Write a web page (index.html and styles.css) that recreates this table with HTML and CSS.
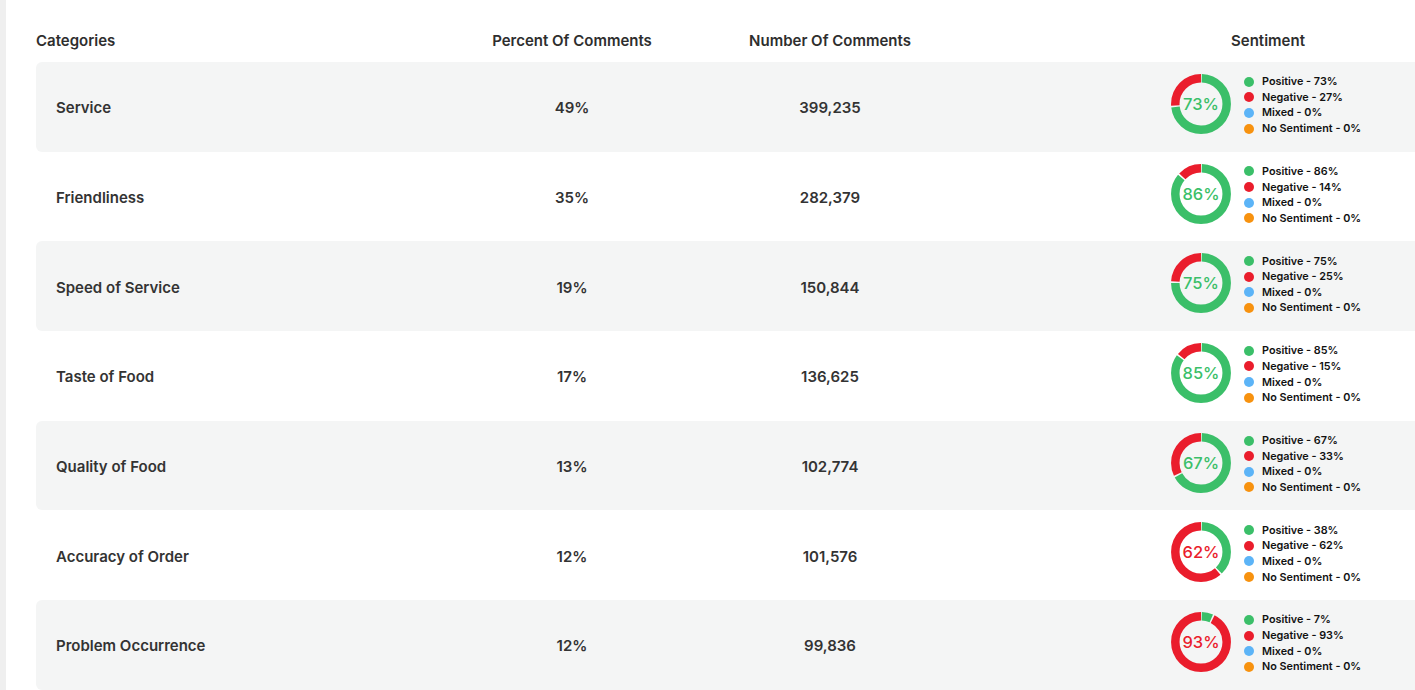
FILE: index.html
```html
<!DOCTYPE html>
<html>
<head>
<meta charset="utf-8">
<link rel="stylesheet" href="styles.css">
</head>
<body>
<div class="page">
  <div class="strip"></div>
  <div class="content">
    <div class="head grid">
      <div class="c-cat">Categories</div>
      <div class="c-pct">Percent Of Comments</div>
      <div class="c-num">Number Of Comments</div>
      <div class="c-sp"></div>
      <div class="c-sent">Sentiment</div>
    </div>

    <div class="row grid odd">
      <div class="c-cat">Service</div>
      <div class="c-pct">49%</div>
      <div class="c-num">399,235</div>
      <div class="c-sp"></div>
      <div class="c-sent sent">
        <svg class="donut" viewBox="0 0 60 60" width="60" height="60">
          <g transform="rotate(-90 30 30)">
            <circle cx="30" cy="30" r="25.7" class="arc pos" stroke-dasharray="116.4 161.5" stroke-dashoffset="-0.75"/>
            <circle cx="30" cy="30" r="25.7" class="arc neg" stroke-dasharray="42.1 161.5" stroke-dashoffset="-118.65"/>
          </g>
          <text x="30" y="36" class="dtext tpos">73%</text>
        </svg>
        <ul class="legend">
          <li><span class="dot d-pos"></span>Positive - 73%</li>
          <li><span class="dot d-neg"></span>Negative - 27%</li>
          <li><span class="dot d-mix"></span>Mixed - 0%</li>
          <li><span class="dot d-none"></span>No Sentiment - 0%</li>
        </ul>
      </div>
    </div>

    <div class="row grid">
      <div class="c-cat">Friendliness</div>
      <div class="c-pct">35%</div>
      <div class="c-num">282,379</div>
      <div class="c-sp"></div>
      <div class="c-sent sent">
        <svg class="donut" viewBox="0 0 60 60" width="60" height="60">
          <g transform="rotate(-90 30 30)">
            <circle cx="30" cy="30" r="25.7" class="arc pos" stroke-dasharray="137.39 161.5" stroke-dashoffset="-0.75"/>
            <circle cx="30" cy="30" r="25.7" class="arc neg" stroke-dasharray="21.11 161.5" stroke-dashoffset="-139.64"/>
          </g>
          <text x="30" y="36" class="dtext tpos">86%</text>
        </svg>
        <ul class="legend">
          <li><span class="dot d-pos"></span>Positive - 86%</li>
          <li><span class="dot d-neg"></span>Negative - 14%</li>
          <li><span class="dot d-mix"></span>Mixed - 0%</li>
          <li><span class="dot d-none"></span>No Sentiment - 0%</li>
        </ul>
      </div>
    </div>

    <div class="row grid odd">
      <div class="c-cat">Speed of Service</div>
      <div class="c-pct">19%</div>
      <div class="c-num">150,844</div>
      <div class="c-sp"></div>
      <div class="c-sent sent">
        <svg class="donut" viewBox="0 0 60 60" width="60" height="60">
          <g transform="rotate(-90 30 30)">
            <circle cx="30" cy="30" r="25.7" class="arc pos" stroke-dasharray="119.63 161.5" stroke-dashoffset="-0.75"/>
            <circle cx="30" cy="30" r="25.7" class="arc neg" stroke-dasharray="38.88 161.5" stroke-dashoffset="-121.88"/>
          </g>
          <text x="30" y="36" class="dtext tpos">75%</text>
        </svg>
        <ul class="legend">
          <li><span class="dot d-pos"></span>Positive - 75%</li>
          <li><span class="dot d-neg"></span>Negative - 25%</li>
          <li><span class="dot d-mix"></span>Mixed - 0%</li>
          <li><span class="dot d-none"></span>No Sentiment - 0%</li>
        </ul>
      </div>
    </div>

    <div class="row grid">
      <div class="c-cat">Taste of Food</div>
      <div class="c-pct">17%</div>
      <div class="c-num">136,625</div>
      <div class="c-sp"></div>
      <div class="c-sent sent">
        <svg class="donut" viewBox="0 0 60 60" width="60" height="60">
          <g transform="rotate(-90 30 30)">
            <circle cx="30" cy="30" r="25.7" class="arc pos" stroke-dasharray="135.78 161.5" stroke-dashoffset="-0.75"/>
            <circle cx="30" cy="30" r="25.7" class="arc neg" stroke-dasharray="22.73 161.5" stroke-dashoffset="-138.03"/>
          </g>
          <text x="30" y="36" class="dtext tpos">85%</text>
        </svg>
        <ul class="legend">
          <li><span class="dot d-pos"></span>Positive - 85%</li>
          <li><span class="dot d-neg"></span>Negative - 15%</li>
          <li><span class="dot d-mix"></span>Mixed - 0%</li>
          <li><span class="dot d-none"></span>No Sentiment - 0%</li>
        </ul>
      </div>
    </div>

    <div class="row grid odd">
      <div class="c-cat">Quality of Food</div>
      <div class="c-pct">13%</div>
      <div class="c-num">102,774</div>
      <div class="c-sp"></div>
      <div class="c-sent sent">
        <svg class="donut" viewBox="0 0 60 60" width="60" height="60">
          <g transform="rotate(-90 30 30)">
            <circle cx="30" cy="30" r="25.7" class="arc pos" stroke-dasharray="106.71 161.5" stroke-dashoffset="-0.75"/>
            <circle cx="30" cy="30" r="25.7" class="arc neg" stroke-dasharray="51.80 161.5" stroke-dashoffset="-108.96"/>
          </g>
          <text x="30" y="36" class="dtext tpos">67%</text>
        </svg>
        <ul class="legend">
          <li><span class="dot d-pos"></span>Positive - 67%</li>
          <li><span class="dot d-neg"></span>Negative - 33%</li>
          <li><span class="dot d-mix"></span>Mixed - 0%</li>
          <li><span class="dot d-none"></span>No Sentiment - 0%</li>
        </ul>
      </div>
    </div>

    <div class="row grid">
      <div class="c-cat">Accuracy of Order</div>
      <div class="c-pct">12%</div>
      <div class="c-num">101,576</div>
      <div class="c-sp"></div>
      <div class="c-sent sent">
        <svg class="donut" viewBox="0 0 60 60" width="60" height="60">
          <g transform="rotate(-90 30 30)">
            <circle cx="30" cy="30" r="25.7" class="arc pos" stroke-dasharray="59.87 161.5" stroke-dashoffset="-0.75"/>
            <circle cx="30" cy="30" r="25.7" class="arc neg" stroke-dasharray="98.63 161.5" stroke-dashoffset="-62.12"/>
          </g>
          <text x="30" y="36" class="dtext tneg">62%</text>
        </svg>
        <ul class="legend">
          <li><span class="dot d-pos"></span>Positive - 38%</li>
          <li><span class="dot d-neg"></span>Negative - 62%</li>
          <li><span class="dot d-mix"></span>Mixed - 0%</li>
          <li><span class="dot d-none"></span>No Sentiment - 0%</li>
        </ul>
      </div>
    </div>

    <div class="row grid odd">
      <div class="c-cat">Problem Occurrence</div>
      <div class="c-pct">12%</div>
      <div class="c-num">99,836</div>
      <div class="c-sp"></div>
      <div class="c-sent sent">
        <svg class="donut" viewBox="0 0 60 60" width="60" height="60">
          <g transform="rotate(-90 30 30)">
            <circle cx="30" cy="30" r="25.7" class="arc pos" stroke-dasharray="9.81 161.5" stroke-dashoffset="-0.75"/>
            <circle cx="30" cy="30" r="25.7" class="arc neg" stroke-dasharray="148.70 161.5" stroke-dashoffset="-12.06"/>
          </g>
          <text x="30" y="36" class="dtext tneg">93%</text>
        </svg>
        <ul class="legend">
          <li><span class="dot d-pos"></span>Positive - 7%</li>
          <li><span class="dot d-neg"></span>Negative - 93%</li>
          <li><span class="dot d-mix"></span>Mixed - 0%</li>
          <li><span class="dot d-none"></span>No Sentiment - 0%</li>
        </ul>
      </div>
    </div>
  </div>
</div>
</body>
</html>
```

FILE: styles.css
```css
* { box-sizing: border-box; }
html, body {
  margin: 0;
  padding: 0;
  background: #ffffff;
  font-family: "Inter", "Liberation Sans", sans-serif;
  color: #333333;
}
.page {
  display: flex;
  width: 1415px;
  height: 690px;
  overflow: hidden;
}
.strip {
  flex: 0 0 6px;
  background: #efefef;
}
.content {
  flex: 0 0 1430px;
  padding: 31px 0 0 30px;
}
.grid {
  display: grid;
  grid-template-columns: 436px 200px 316px 182px 196px 1fr;
  width: 1400px;
}
.head {
  height: 20px;
  line-height: 20px;
  margin-bottom: 11px;
  font-size: 15px;
  font-weight: 600;
  color: #2e2e2e;
}
.head .c-cat { padding-left: 0; }
.c-pct, .c-num { text-align: center; }
.head .c-sent { text-align: center; }
.row {
  height: 89.7px;
  padding-top: 2px;
  border-radius: 6px 0 0 6px;
  font-size: 15px;
  font-weight: 600;
  color: #333333;
  align-items: center;
}
.row.odd { background: #f4f5f5; }
.row .c-cat { padding-left: 20px; }
.sent {
  align-self: start;
  padding-top: 10px;
  display: flex;
  align-items: flex-start;
  white-space: nowrap;
}
.donut { display: block; flex: 0 0 60px; margin-left: 1px; }
.arc {
  fill: none;
  stroke-width: 8.5;
}
.arc.pos { stroke: #3bbf69; }
.arc.neg { stroke: #ea1d2c; }
.dtext {
  font-family: "Inter", "Liberation Sans", sans-serif;
  font-size: 16.5px;
  font-weight: 500;
  text-anchor: middle;
}
.tpos { fill: #3bbf69; }
.tneg { fill: #ea1d2c; }
.legend {
  list-style: none;
  margin: 0 0 0 13px;
  padding: 0;
}
.legend li {
  display: flex;
  align-items: center;
  height: 15.6px;
  font-size: 10.8px;
  font-weight: 600;
  color: #111111;
}
.dot {
  width: 10px;
  height: 10px;
  border-radius: 50%;
  margin-right: 8px;
  flex: 0 0 10px;
}
.d-pos { background: #3bbf69; }
.d-neg { background: #ea1d2c; }
.d-mix { background: #5cb4f7; }
.d-none { background: #f7920f; }
```
